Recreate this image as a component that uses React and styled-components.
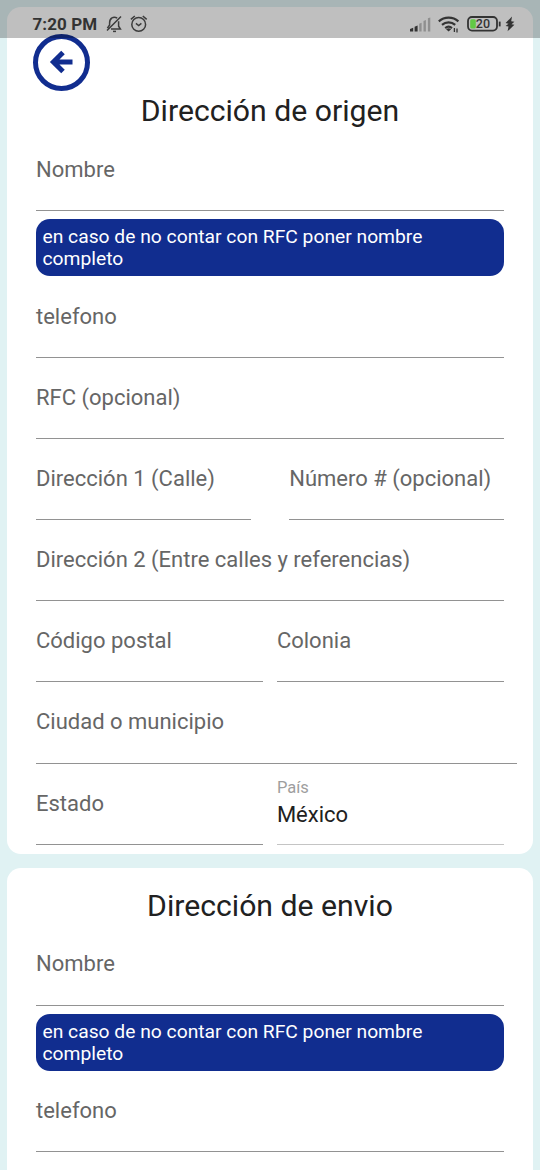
import React from "react";
import styled, { createGlobalStyle } from "styled-components";

const Global = createGlobalStyle`
  * { box-sizing: border-box; }
  body { margin: 0; background: #e0f2f3; font-family: Roboto, sans-serif; }
`;

const Screen = styled.main`
  position: relative;
  width: 540px;
  height: 1170px;
  overflow: hidden;
  padding: 7px 7px 0;
  display: flex;
  flex-direction: column;
  gap: 13.6px;
  background: #e0f2f3;
`;

const StatusBar = styled.header`
  position: absolute;
  z-index: 2;
  inset: 0 0 auto;
  height: 38px;
  padding: 10px 25.5px 0 32.5px;
  display: flex;
  justify-content: space-between;
  background: rgba(0, 0, 0, 0.25);
  color: #333;
`;

const StatusGroup = styled.div`
  display: flex;
  align-items: center;
  height: 28px;
`;

const Clock = styled.span`
  font-size: 17px;
  font-weight: 700;
  letter-spacing: 0.1px;
  margin-right: 8.7px;
`;

const Card = styled.section`
  flex: none;
  height: ${(p) => p.$height}px;
  padding: ${(p) => p.$top}px 29px 0;
  border-radius: 14px;
  background: #fff;
`;

const BackButton = styled.button`
  display: flex;
  align-items: center;
  justify-content: center;
  width: 57px;
  height: 57px;
  margin-left: -3px;
  padding: 0 0 1.5px;
  border: 5.5px solid #112d8f;
  border-radius: 50%;
  background: #fff;
`;

const Title = styled.h1`
  margin: 0;
  height: 38.8px;
  line-height: 39px;
  text-align: center;
  font-size: 30.2px;
  font-weight: 400;
  color: #212121;
`;

const Row = styled.div`
  display: flex;
  gap: ${(p) => p.$gap || 0}px;
  margin-right: ${(p) => (p.$wide ? -12.5 : 0)}px;
`;

const Field = styled.label`
  flex: 1 1 0;
  min-width: 0;
  height: 81.18px;
  display: flex;
  flex-direction: column;
  justify-content: center;
  border-bottom: 1px solid ${(p) => (p.$disabled ? "#c4c4c4" : "#929292")};
  white-space: nowrap;
`;

const Label = styled.span`
  font-size: 22px;
  line-height: 26px;
  color: #666;
`;

const FloatingLabel = styled.span`
  font-size: 16.5px;
  line-height: 20px;
  margin-top: -1.3px;
  color: #9e9e9e;
`;

const Value = styled.span`
  font-size: 22px;
  line-height: 26px;
  margin-top: 4px;
  color: #212121;
`;

const Hint = styled.p`
  margin: 8px 0 0;
  height: 57.5px;
  padding: 7.1px 6.5px;
  border-radius: 14px;
  background: #112d8f;
  color: #fff;
  font-size: 19.25px;
  line-height: 22px;
`;

const Icon = styled.svg`
  display: block;
  flex: none;
  overflow: visible;
  margin-left: ${(p) => p.$ml || 0}px;
`;

const BatteryText = styled.text`
  font: 500 12.5px Roboto, sans-serif;
  fill: #333;
`;

function BellOff() {
  return (
    <Icon width="16" height="18" viewBox="0 0 16 18" fill="none" stroke="#3c3c3c" strokeWidth="1.5">
      <path d="M1 15.5 15 1.5M11.2 3.2C9.8 2.2 7.4 1.9 5.8 3 3.9 4.2 3.6 6 3.6 8v2L1.4 13.2M5 14h9.4l-1.8-2.8V6.3" />
      <path d="M7 16.4h3" />
    </Icon>
  );
}

function Alarm() {
  return (
    <Icon $ml={8} width="18" height="18" viewBox="0 0 18 18" fill="none" stroke="#3c3c3c" strokeWidth="1.5">
      <circle cx="8.7" cy="9.4" r="6.9" />
      <path d="m5.9 8.4 2.8 2.1 2.7-2.1M.9 4.4 4.8 1M16.7 4.4 12.8 1" />
    </Icon>
  );
}

function Signal() {
  return (
    <Icon width="21" height="15" viewBox="0 0 21 15">
      <path fill="#333" d="M0 14.5V12l3.2-1.2v3.7zM4.6 14.5V9.7l3-1.2v6z" />
      <path fill="#8f8f8f" d="M9.2 14.5V6.8l2.4-1v8.7zM13.5 14.5V4l2.4-1v11.5zM17.9 14.5V1.2l2.4-.8v14.1z" />
    </Icon>
  );
}

function Wifi() {
  return (
    <Icon $ml={7.2} width="21" height="17" viewBox="0 0 21 17" fill="none" stroke="#333" strokeWidth="2.1">
      <path d="M.8 5.4c5.6-5 14-5 19.6 0M4 8.9c3.8-3.4 9.4-3.4 13.2 0M7.2 12.1c2-1.7 4.8-1.7 6.8 0" />
      <path fill="#333" stroke="none" d="m8.1 13.2 2.5 2.4 2.5-2.4q-2.5-1.7-5 0z" />
      <path strokeWidth="1.3" d="M16.4 12v4M19 12.6v4" />
    </Icon>
  );
}

function Battery() {
  return (
    <Icon $ml={8} width="34" height="16" viewBox="0 0 34 16">
      <rect x="1" y="1" width="29" height="13.6" rx="4" fill="none" stroke="#333" strokeWidth="1.8" />
      <rect x="3.2" y="3.2" width="5.6" height="9.2" rx="1.5" fill="#62c944" />
      <BatteryText x="8.8" y="12.3">20</BatteryText>
      <path d="M32.7 5.6v4.8" stroke="#333" strokeWidth="1.8" />
    </Icon>
  );
}

function Bolt() {
  return (
    <Icon $ml={3.5} width="10" height="16" viewBox="0 0 10 16">
      <path fill="#333" d="M7 .5.6 7.1l2.9.6L.6 10l2.9.6L2.6 15.3 9.4 8.8l-2.9-.6L9.4 5.8 6.2 5.3z" />
    </Icon>
  );
}

function BackArrow() {
  return (
    <Icon $ml={-1.5} width="24" height="24" viewBox="0 0 24 24" fill="none" stroke="#112d8f" strokeWidth="5">
      <path d="M14 2.4 4.4 12l9.6 9.6M5 12h18.5" />
    </Icon>
  );
}

function TextField({ label, value, disabled }) {
  return (
    <Field $disabled={disabled}>
      {value ? (
        <>
          <FloatingLabel>{label}</FloatingLabel>
          <Value>{value}</Value>
        </>
      ) : (
        <Label>{label}</Label>
      )}
    </Field>
  );
}

function ContactFields() {
  return (
    <>
      <Row><TextField label="Nombre" /></Row>
      <Hint>en caso de no contar con RFC poner nombre completo</Hint>
      <Row><TextField label="telefono" /></Row>
    </>
  );
}

export default function App() {
  return (
    <>
      <Global />
      <Screen>
        <StatusBar>
          <StatusGroup>
            <Clock>7:20 PM</Clock>
            <BellOff />
            <Alarm />
          </StatusGroup>
          <StatusGroup>
            <Signal />
            <Wifi />
            <Battery />
            <Bolt />
          </StatusGroup>
        </StatusBar>
        <Card $height={847} $top={27}>
          <BackButton aria-label="Regresar"><BackArrow /></BackButton>
          <Title>Dirección de origen</Title>
          <ContactFields />
          <Row><TextField label="RFC (opcional)" /></Row>
          <Row $gap={38.5}>
            <TextField label="Dirección 1 (Calle)" />
            <TextField label="Número # (opcional)" />
          </Row>
          <Row><TextField label="Dirección 2 (Entre calles y referencias)" /></Row>
          <Row $gap={13.75}>
            <TextField label="Código postal" />
            <TextField label="Colonia" />
          </Row>
          <Row $wide><TextField label="Ciudad o municipio" /></Row>
          <Row $gap={13.75}>
            <TextField label="Estado" />
            <TextField label="País" value="México" disabled />
          </Row>
        </Card>
        <Card $height={420} $top={18}>
          <Title>Dirección de envio</Title>
          <ContactFields />
        </Card>
      </Screen>
    </>
  );
}
